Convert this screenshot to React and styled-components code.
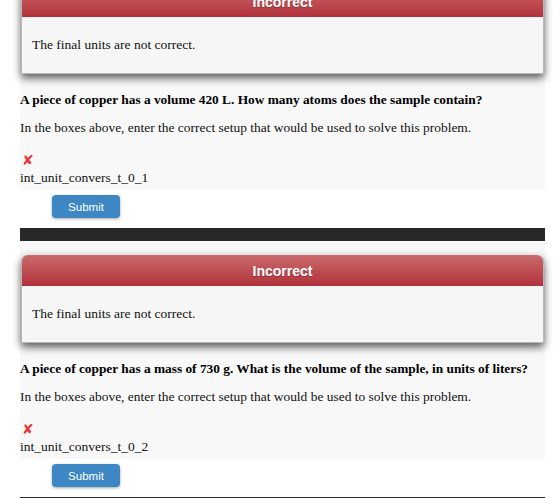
import React from "react";
import styled, { createGlobalStyle } from "styled-components";

const GlobalStyle = createGlobalStyle`
  body {
    margin: 0;
    background: #ffffff;
    font-family: "Liberation Serif", "Times New Roman", serif;
    color: #111;
    overflow: hidden;
  }
`;

const problems = [
  {
    id: "int_unit_convers_t_0_1",
    question:
      "A piece of copper has a volume 420 L. How many atoms does the sample contain?",
  },
  {
    id: "int_unit_convers_t_0_2",
    question:
      "A piece of copper has a mass of 730 g. What is the volume of the sample, in units of liters?",
  },
];

export default function App() {
  return (
    <>
      <GlobalStyle />
      <Page>
        {problems.map((p) => (
          <Problem key={p.id}>
            <Panel>
              <Feedback>
                <FeedbackHeader>Incorrect</FeedbackHeader>
                <FeedbackBody>The final units are not correct.</FeedbackBody>
              </Feedback>
              <Question>{p.question}</Question>
              <Hint>
                In the boxes above, enter the correct setup that would be used to
                solve this problem.
              </Hint>
              <WrongMark>✘</WrongMark>
              <FieldId>{p.id}</FieldId>
            </Panel>
            <Actions>
              <SubmitButton type="button">Submit</SubmitButton>
            </Actions>
            <Divider />
          </Problem>
        ))}
      </Page>
    </>
  );
}

const Page = styled.div`
  margin-top: -28px;
  padding-left: 20px;
  width: 525px;
`;

const Problem = styled.section`
  display: flex;
  flex-direction: column;
`;

const Panel = styled.div`
  background: #f8f8f8;
  padding: 14px 0 4px;
  display: flex;
  flex-direction: column;
`;

const Feedback = styled.div`
  margin: 0 1px;
  border-radius: 6px 6px 0 0;
  border: 1px solid rgba(0, 0, 0, 0.25);
  border-top: none;
  box-shadow: 0 4px 9px rgba(0, 0, 0, 0.65);
  background: #f6f6f6;
`;

const FeedbackHeader = styled.div`
  height: 31px;
  display: flex;
  align-items: center;
  justify-content: center;
  border-radius: 6px 6px 0 0;
  background: linear-gradient(#ca6b6d, #b2313a);
  color: #fff;
  font-family: "Liberation Sans", Arial, sans-serif;
  font-weight: bold;
  font-size: 14px;
  text-shadow: 0 1px 1px rgba(0, 0, 0, 0.25);
`;

const FeedbackBody = styled.div`
  height: 56px;
  display: flex;
  align-items: center;
  padding: 0 10px;
  font-size: 13.5px;
  color: #111;
`;

const Question = styled.div`
  margin-top: 18px;
  font-size: 13.35px;
  line-height: 16px;
  font-weight: bold;
  color: #000;
`;

const Hint = styled.div`
  margin-top: 12px;
  font-size: 13.45px;
  line-height: 16px;
`;

const WrongMark = styled.div`
  margin: 15px 0 0 2px;
  font-family: "DejaVu Sans", sans-serif;
  font-size: 14px;
  line-height: 19px;
  color: #e43a3a;
`;

const FieldId = styled.div`
  font-size: 13.5px;
  line-height: 16px;
`;

const Actions = styled.div`
  display: flex;
  padding: 5px 0 0 32px;
`;

const SubmitButton = styled.button`
  width: 68px;
  height: 23px;
  border: none;
  border-radius: 4px;
  background: #3d87c5;
  color: #fff;
  font-family: "Liberation Sans", Arial, sans-serif;
  font-size: 11.5px;
  box-shadow: 0 1px 3px rgba(0, 0, 0, 0.35);
  cursor: pointer;
`;

const Divider = styled.div`
  margin-top: 10px;
  height: 13px;
  background: #28282a;
`;
